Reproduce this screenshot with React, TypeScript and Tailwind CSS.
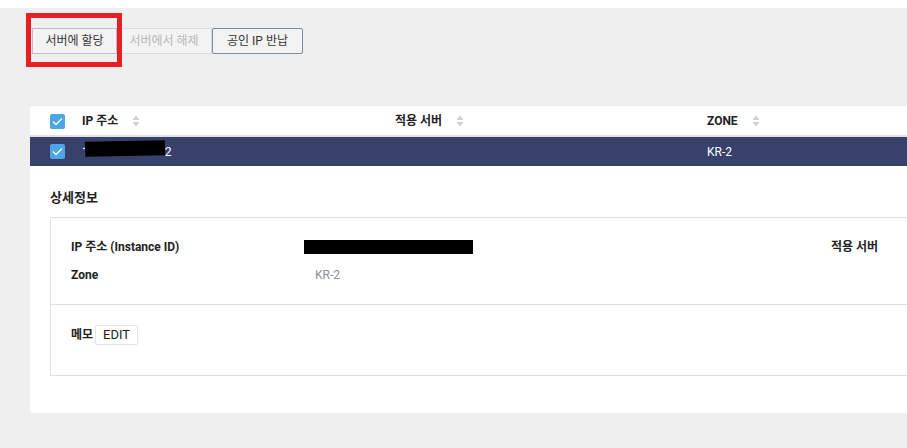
import React from "react";

const font = { fontFamily: "Roboto, 'Noto Sans CJK KR', sans-serif" };

function Check() {
  return (
    <div className="w-[15px] h-[15px] rounded-[2px] bg-[#4ba5e6] flex items-center justify-center">
      <svg width="11" height="9" viewBox="0 0 11 9">
        <path d="M1 4.5 L4 7.5 L10 1.5" fill="none" stroke="#fff" strokeWidth="1.3" />
      </svg>
    </div>
  );
}

function Sort() {
  return (
    <svg width="8" height="12" viewBox="0 0 8 12" className="ml-[14px]">
      <path d="M4 0.5 L7.5 5 L0.5 5 Z" fill="#d0d0d0" />
      <path d="M4 11.5 L7.5 7 L0.5 7 Z" fill="#d0d0d0" />
    </svg>
  );
}

export default function App() {
  return (
    <div className="relative w-[907px] h-[448px] overflow-hidden bg-[#efefef] text-[#222]" style={font}>
      <div className="h-[8px] bg-white" />
      {/* buttons */}
      <div className="flex pl-[32px] pt-[20px]">
        <button className="h-[26px] w-[85px] border border-[#b9bec7] bg-[#f3f3f3] text-[12px] text-[#333]">서버에 할당</button>
        <button className="h-[26px] w-[95px] border border-l-0 border-[#dcdcdc] bg-[#f3f3f3] text-[12px] text-[#b8b8b8]">서버에서 해제</button>
        <button className="h-[26px] w-[91px] border border-[#7d8aa3] bg-[#f3f3f3] rounded-[2px] text-[12px] text-[#333]">공인 IP 반납</button>
      </div>
      {/* annotation */}
      <div className="absolute left-[26px] top-[13px] w-[96px] h-[54px] border-[5px] border-[#e51f24]" />

      {/* panel */}
      <div className="ml-[30px] mt-[52px] h-[307px] bg-white rounded-l-[3px]">
        {/* header */}
        <div className="flex items-center h-[31px] pt-[1px] border-b-2 border-[#e2e2e2] text-[12px] font-bold">
          <div className="w-[52px] pl-[20px]"><Check /></div>
          <div className="w-[313px] flex items-center">IP 주소<Sort /></div>
          <div className="w-[312px] flex items-center">적용 서버<Sort /></div>
          <div className="flex items-center">ZONE<Sort /></div>
        </div>
        {/* selected row */}
        <div className="flex items-center h-[29px] bg-[#37416b] text-white text-[12px]">
          <div className="w-[52px] pl-[20px]"><Check /></div>
          <div className="w-[313px] relative flex items-center">
            <span>1</span>
            <div className="absolute left-[3px] top-[-2px] w-[80px] h-[15px] bg-black -rotate-1" />
            <span className="ml-[76px]">2</span>
          </div>
          <div className="w-[312px]" />
          <div>KR-2</div>
        </div>
        {/* details */}
        <div className="pl-[20px] pt-[23px]">
          <div className="text-[13px] font-bold leading-[18px]">상세정보</div>
          <div className="mt-[10px] h-[159px] border border-r-0 border-[#e0e0e0]">
            <div className="h-[87px] border-b border-[#e0e0e0] pl-[20px] pt-[20px] text-[12px]">
              <div className="flex items-center h-[18px]">
                <div className="w-[233px] font-bold">IP 주소 (Instance ID)</div>
                <div className="w-[169px] h-[14px] bg-black" />
                <div className="ml-[358px] font-bold">적용 서버</div>
              </div>
              <div className="flex items-center h-[18px] mt-[10px]">
                <div className="w-[244px] font-bold">Zone</div>
                <div className="text-[#8a8f98]">KR-2</div>
              </div>
            </div>
            <div className="pl-[20px] pt-[20px] flex items-center text-[12px]">
              <span className="font-bold">메모</span>
              <span className="ml-[2px] h-[20px] px-[7px] border border-[#e3e3e3] rounded-[2px] flex items-center text-[13px]">EDIT</span>
            </div>
          </div>
        </div>
      </div>
    </div>
  );
}
